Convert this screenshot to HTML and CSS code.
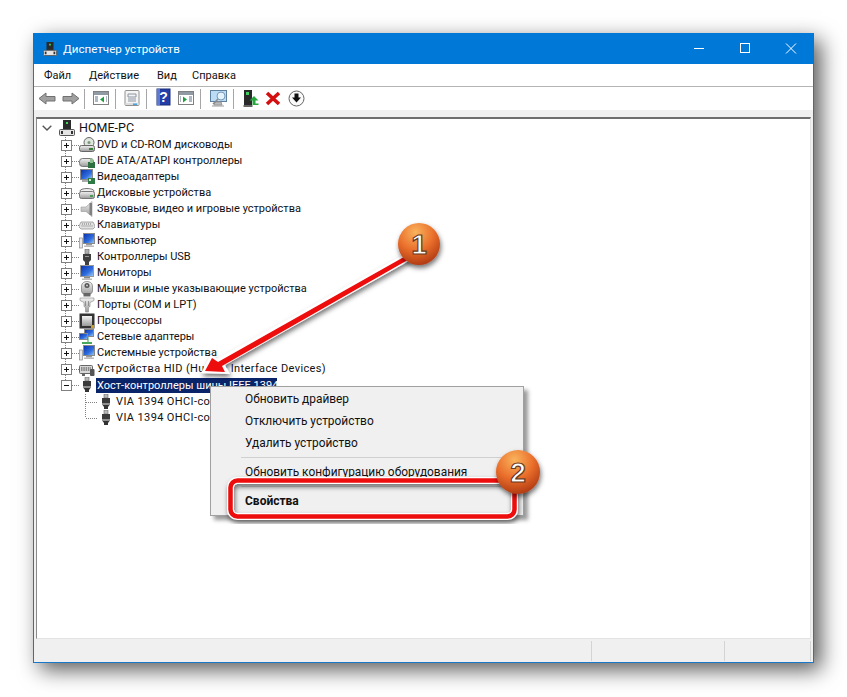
FILE: index.html
```html
<!DOCTYPE html>
<html lang="ru">
<head>
    <meta charset="UTF-8">
    <title>Диспетчер устройств</title>
    <link rel="stylesheet" href="styles.css">
</head>
<body>
    <!-- icons, 16x16 -->
    <svg class="defs">
        <defs>
            <linearGradient id="screen" x1="0" y1="0" x2="1" y2="1">
                <stop offset="0" stop-color="#0a2fa8"/><stop offset=".6" stop-color="#2f6fe0"/><stop offset="1" stop-color="#a8d0f5"/>
            </linearGradient>
            <linearGradient id="metal" x1="0" y1="0" x2="0" y2="1">
                <stop offset="0" stop-color="#f2f2f2"/><stop offset="1" stop-color="#9a9a9a"/>
            </linearGradient>
            <radialGradient id="ball" cx=".42" cy=".22" r=".85">
                <stop offset="0" stop-color="#f9b35c"/><stop offset=".5" stop-color="#ea6f2c"/><stop offset="1" stop-color="#a8320f"/>
            </radialGradient>
            <filter id="soft" x="-20%" y="-20%" width="140%" height="140%">
                <feDropShadow dx="1" dy="3" stdDeviation="2.500" flood-color="#000" flood-opacity=".55"/>
            </filter>
            <symbol id="i-pc" viewBox="0 0 16 16">
                <rect x="4" y="0" width="8" height="10" fill="#2a2a2a"/>
                <rect x="7" y="2" width="2" height="2" fill="#45d060"/>
                <rect x="0.500" y="9.500" width="15" height="6" rx="1" fill="#e4e4e4" stroke="#555"/>
                <rect x="2" y="11" width="2" height="3" fill="#333"/>
                <rect x="12" y="11" width="2" height="3" fill="#333"/>
            </symbol>
            <symbol id="i-dvd" viewBox="0 0 16 16">
                <circle cx="10" cy="5.500" r="5" fill="#dfe6df" stroke="#666"/>
                <circle cx="10" cy="5.500" r="1.500" fill="#7a9a7a"/>
                <rect x="0.500" y="8.500" width="15" height="6" rx="2" fill="url(#metal)" stroke="#666"/>
                <rect x="10" y="11" width="4" height="2" fill="#3d7d3d"/>
            </symbol>
            <symbol id="i-ide" viewBox="0 0 16 16">
                <rect x="0.500" y="5.500" width="14" height="8" rx="3" fill="url(#metal)" stroke="#777"/>
                <rect x="9" y="9" width="7" height="6" fill="#2f7040"/>
                <rect x="11" y="6" width="3" height="4" fill="#8fbf8f"/>
            </symbol>
            <symbol id="i-video" viewBox="0 0 16 16">
                <rect x="1.500" y="0.500" width="12" height="10" fill="url(#screen)" stroke="#8a8a8a"/>
                <rect x="3" y="11" width="7" height="2" fill="#aaa"/>
                <rect x="9" y="9" width="7" height="6" fill="#2f7a45"/>
                <rect x="10" y="10" width="2" height="2" fill="#cfe8c8"/>
            </symbol>
            <symbol id="i-disk" viewBox="0 0 16 16">
                <ellipse cx="8" cy="6" rx="7" ry="2.500" fill="#eee" stroke="#777"/>
                <rect x="0.500" y="6.500" width="15" height="7" rx="2" fill="url(#metal)" stroke="#777"/>
                <rect x="11" y="10" width="3" height="2" fill="#4a9a5a"/>
            </symbol>
            <symbol id="i-sound" viewBox="0 0 16 16">
                <polygon points="2,6 7,6 13,0.500 13,15.500 7,10.500 2,10.500" fill="url(#metal)" stroke="#999" stroke-width=".6"/>
                <rect x="10.500" y="2" width="2.500" height="12" fill="#808080"/>
            </symbol>
            <symbol id="i-kbd" viewBox="0 0 16 16">
                <path d="M2 5h12l2 4v1l-2 2H2L0 10V9z" fill="#e2e2e2" stroke="#888" stroke-width=".7"/>
                <path d="M3 7h10M2.500 9h11" stroke="#777" stroke-dasharray="1 1"/>
            </symbol>
            <symbol id="i-comp" viewBox="0 0 16 16">
                <rect x="0.500" y="5" width="3" height="10" fill="#e8e8e8" stroke="#8a8a8a" stroke-width=".7"/>
                <rect x="4.500" y="0.500" width="11" height="10" fill="url(#screen)" stroke="#8a8a8a"/>
                <rect x="7" y="11" width="6" height="1.500" fill="#999"/>
                <rect x="5" y="12.500" width="10" height="1.500" fill="#bbb"/>
            </symbol>
            <symbol id="i-usb" viewBox="0 0 16 16">
                <rect x="6" y="0" width="4" height="5" fill="#b0b0b0" stroke="#666" stroke-width=".6"/>
                <path d="M4 5h8v6l-2 2v3H6v-3l-2-2z" fill="#3f3f3f"/>
                <rect x="6" y="7" width="4" height="1" fill="#999"/>
            </symbol>
            <symbol id="i-mon" viewBox="0 0 16 16">
                <rect x="1.500" y="0.500" width="13" height="11" fill="url(#screen)" stroke="#999"/>
                <rect x="5" y="12" width="6" height="1.500" fill="#888"/>
                <rect x="3" y="13.500" width="10" height="1.500" fill="#bbb"/>
            </symbol>
            <symbol id="i-mouse" viewBox="0 0 16 16">
                <path d="M2.500 5c0-6 11-6 11 0v5c0 5-11 5-11 0z" fill="url(#metal)" stroke="#777" stroke-width=".7"/>
                <circle cx="8" cy="4.500" r="2.500" fill="#555"/>
                <circle cx="8" cy="4.500" r="1" fill="#ccc"/>
                <rect x="4.500" y="12" width="7" height="3.500" fill="#666"/>
            </symbol>
            <symbol id="i-port" viewBox="0 0 16 16">
                <path d="M1 1h14v2.500l-4 2v4l-1.500 1v4.500h-3V10.500L5 9.500v-4l-4-2z" fill="url(#metal)" stroke="#888" stroke-width=".6"/>
                <path d="M6.500 4v5M9.500 4v5" stroke="#777" stroke-width=".7"/>
            </symbol>
            <symbol id="i-cpu" viewBox="0 0 16 16">
                <rect x="0.500" y="0.500" width="15" height="15" fill="#333"/>
                <rect x="3" y="3" width="10" height="10" fill="url(#metal)"/>
                <rect x="12" y="12" width="3" height="3" fill="#c99a2e"/>
            </symbol>
            <symbol id="i-net" viewBox="0 0 16 16">
                <rect x="5.500" y="0.500" width="9" height="7" fill="url(#screen)" stroke="#888"/>
                <rect x="0.500" y="4.500" width="8" height="6" fill="url(#screen)" stroke="#888"/>
                <path d="M9 8v5" stroke="#3c9a4f" fill="none"/>
                <rect x="3" y="13" width="10" height="2" fill="#49a85c"/>
            </symbol>
            <symbol id="i-hid" viewBox="0 0 16 16">
                <rect x="0.500" y="4.500" width="13" height="8" rx="1" fill="#d8d8d8" stroke="#666"/>
                <path d="M2 7h10M2 9h10" stroke="#3a3a3a" stroke-dasharray="1.500 .8"/>
                <rect x="11" y="8" width="4.500" height="7" rx="1" fill="#555"/>
                <rect x="3" y="12" width="3" height="3" fill="#666"/>
            </symbol>
            <symbol id="i-fw" viewBox="0 0 16 16">
                <rect x="6" y="0" width="4" height="4" fill="#b8b8b8" stroke="#666" stroke-width=".6"/>
                <rect x="4" y="4" width="8" height="5" fill="#3a3a3a"/>
                <rect x="4" y="9" width="8" height="2" fill="#909090"/>
                <path d="M4.500 11h7L10 13v2H6v-2z" fill="#333"/>
            </symbol>
        </defs>
    </svg>

    <div class="window">
        <div class="titlebar">
            <svg class="title-icon"><use href="#i-pc"/></svg>
            <span class="title-text">Диспетчер устройств</span>
            <div class="win-btns">
                <svg class="win-btn" viewBox="0 0 46 31"><path d="M18 15.500h10" stroke="#fff"/></svg>
                <svg class="win-btn" viewBox="0 0 46 31"><rect x="18.500" y="10.500" width="9" height="9" fill="none" stroke="#fff"/></svg>
                <svg class="win-btn" viewBox="0 0 46 31"><path d="M18 10.500l10 10M28 10.500l-10 10" stroke="#fff"/></svg>
            </div>
        </div>

        <div class="menubar">
            <span class="menu-item menu-file">Файл</span>
            <span class="menu-item menu-action">Действие</span>
            <span class="menu-item menu-view">Вид</span>
            <span class="menu-item">Справка</span>
        </div>

        <div class="toolbar">
            <svg class="tool" viewBox="0 0 23 23"><path d="M3 11.500l7-5.500v3.500h9v4.500h-9v3z" fill="#a0a0a0" stroke="#707070"/></svg>
            <svg class="tool" viewBox="0 0 23 23"><path d="M20 11.500l-7-5.500v3.500H4v4.500h9v3z" fill="#a0a0a0" stroke="#707070"/></svg>
            <i class="tool-sep"></i>
            <svg class="tool" viewBox="0 0 23 23">
                <rect x="3.500" y="4.500" width="15" height="13" fill="#fff" stroke="#808080"/><rect x="4" y="5" width="14" height="3" fill="#8f9aa5"/>
                <path d="M5 10h3M5 12h3M5 14h3M16 10h1M16 12h1M16 14h1" stroke="#5f7389"/><path d="M14 9.500v6l-4-3z" fill="#1f9f3f"/>
            </svg>
            <i class="tool-sep"></i>
            <svg class="tool" viewBox="0 0 23 23">
                <rect x="4" y="3.500" width="14" height="15" rx="1" fill="#f4f4f4" stroke="#909090"/><rect x="4.500" y="16" width="13" height="2" fill="#ddd"/>
                <path d="M7 7h8v3H7zM7 12h8M7 14h8" fill="none" stroke="#8a95a0"/><rect x="12" y="16.500" width="4" height="1.500" fill="#4aa3e0"/>
            </svg>
            <i class="tool-sep"></i>
            <svg class="tool" viewBox="0 0 23 23">
                <rect x="5" y="2" width="13" height="16" fill="#2440a8" stroke="#1a2c78"/><rect x="5" y="2" width="3" height="16" fill="#5d78d0"/>
                <text class="help-mark" x="11.500" y="15">?</text>
            </svg>
            <svg class="tool" viewBox="0 0 23 23">
                <rect x="3.500" y="4.500" width="15" height="13" fill="#fff" stroke="#808080"/><rect x="4" y="5" width="14" height="3" fill="#8f9aa5"/>
                <path d="M5 10h1M5 12h1M5 14h1M14 10h3M14 12h3M14 14h3" stroke="#5f7389"/><path d="M8 9.500v6l4-3z" fill="#1f9f3f"/>
            </svg>
            <i class="tool-sep"></i>
            <svg class="tool tool-wide" viewBox="0 0 25 23">
                <rect x="4.500" y="3.500" width="16" height="11" fill="#bcdcf5" stroke="#5f7f9f"/><path d="M8 18h8l-1-3H9zM6 19h12" fill="#bbb" stroke="#999"/>
                <circle cx="15" cy="9" r="4" fill="#e4f2fc" stroke="#7a9ab5"/><path d="M12 12l-5 5" stroke="#888" stroke-width="1.500"/>
            </svg>
            <i class="tool-sep"></i>
            <svg class="tool" viewBox="0 0 23 23">
                <rect x="5" y="3" width="8" height="15" fill="#2a2a2a"/><rect x="7" y="5" width="3" height="3" fill="#3fd05f"/>
                <path d="M4.500 19h9" stroke="#666" stroke-width="2"/><path d="M15 9l4.500 4.500h-3v3h3v1.500h-6V13.500h-3z" fill="#26a83f"/>
            </svg>
            <svg class="tool" viewBox="0 0 23 23"><path d="M5 6l12 11M17 6L5 17" stroke="#d40f0f" stroke-width="3.600"/></svg>
            <svg class="tool" viewBox="0 0 23 23">
                <circle cx="11.500" cy="11.500" r="7.500" fill="#fafafa" stroke="#666"/><path d="M9.500 6.500h4v4h2.500l-4.500 5-4.500-5h2.500z" fill="#111"/>
            </svg>
        </div>

        <div class="tree">
            <div class="root-row">
                <svg class="chevron" viewBox="0 0 10 6"><path d="M.7.700L5 5l4.300-4.300" fill="none" stroke="#555" stroke-width="1.400"/></svg>
                <svg class="icon"><use href="#i-pc"/></svg>
                <span class="root-label">HOME-PC</span>
            </div>
            <div class="row"><span class="twist"></span><i class="dash"></i><svg class="icon"><use href="#i-dvd"/></svg><span class="label">DVD и CD-ROM дисководы</span></div>
            <div class="row"><span class="twist"></span><i class="dash"></i><svg class="icon"><use href="#i-ide"/></svg><span class="label">IDE ATA/ATAPI контроллеры</span></div>
            <div class="row"><span class="twist"></span><i class="dash"></i><svg class="icon"><use href="#i-video"/></svg><span class="label">Видеоадаптеры</span></div>
            <div class="row"><span class="twist"></span><i class="dash"></i><svg class="icon"><use href="#i-disk"/></svg><span class="label">Дисковые устройства</span></div>
            <div class="row"><span class="twist"></span><i class="dash"></i><svg class="icon"><use href="#i-sound"/></svg><span class="label">Звуковые, видео и игровые устройства</span></div>
            <div class="row"><span class="twist"></span><i class="dash"></i><svg class="icon"><use href="#i-kbd"/></svg><span class="label">Клавиатуры</span></div>
            <div class="row"><span class="twist"></span><i class="dash"></i><svg class="icon"><use href="#i-comp"/></svg><span class="label">Компьютер</span></div>
            <div class="row"><span class="twist"></span><i class="dash"></i><svg class="icon"><use href="#i-usb"/></svg><span class="label">Контроллеры USB</span></div>
            <div class="row"><span class="twist"></span><i class="dash"></i><svg class="icon"><use href="#i-mon"/></svg><span class="label">Мониторы</span></div>
            <div class="row"><span class="twist"></span><i class="dash"></i><svg class="icon"><use href="#i-mouse"/></svg><span class="label">Мыши и иные указывающие устройства</span></div>
            <div class="row"><span class="twist"></span><i class="dash"></i><svg class="icon"><use href="#i-port"/></svg><span class="label">Порты (COM и LPT)</span></div>
            <div class="row"><span class="twist"></span><i class="dash"></i><svg class="icon"><use href="#i-cpu"/></svg><span class="label">Процессоры</span></div>
            <div class="row"><span class="twist"></span><i class="dash"></i><svg class="icon"><use href="#i-net"/></svg><span class="label">Сетевые адаптеры</span></div>
            <div class="row"><span class="twist"></span><i class="dash"></i><svg class="icon"><use href="#i-comp"/></svg><span class="label">Системные устройства</span></div>
            <div class="row"><span class="twist"></span><i class="dash"></i><svg class="icon"><use href="#i-hid"/></svg><span class="label latin">Устройства HID (Human Interface Devices)</span></div>
            <div class="row"><span class="twist open last"></span><i class="dash"></i><svg class="icon"><use href="#i-fw"/></svg><span class="label selected">Хост-контроллеры шины IEEE 1394</span></div>
            <div class="row child first-child"><span class="vline"></span><i class="dash"></i><svg class="icon"><use href="#i-fw"/></svg><span class="label latin">VIA 1394 OHCI-сов</span></div>
            <div class="row child"><span class="vline last"></span><i class="dash"></i><svg class="icon"><use href="#i-fw"/></svg><span class="label latin">VIA 1394 OHCI-сов</span></div>
        </div>

        <div class="statusbar">
            <span class="pane pane-main"></span>
            <span class="pane pane-mid"></span>
            <span class="pane pane-end"></span>
        </div>
    </div>

    <div class="context-menu">
        <div class="ctx-item">Обновить драйвер</div>
        <div class="ctx-item">Отключить устройство</div>
        <div class="ctx-item">Удалить устройство</div>
        <div class="ctx-sep"></div>
        <div class="ctx-item">Обновить конфигурацию оборудования</div>
        <div class="ctx-sep"></div>
        <div class="ctx-item ctx-bold">Свойства</div>
    </div>

    <svg class="marks" viewBox="0 0 847 697">
        <g filter="url(#soft)">
            <rect x="230.500" y="480.500" width="284" height="36" rx="7" fill="none" stroke="#fff" stroke-width="7"/>
            <rect x="230.500" y="480.500" width="284" height="36" rx="7" fill="none" stroke="#ee0a0a" stroke-width="4.500"/>
        </g>
        <g filter="url(#soft)">
            <polygon points="201,373 211,355 217,359 410,251 414,258 225,365 230,374" fill="#fff"/>
            <polygon points="205,371 212,358 218,362 411,253 413,257 222,366 225,372" fill="#ee0a0a"/>
        </g>
        <g filter="url(#soft)">
            <circle cx="419" cy="244" r="21" fill="url(#ball)"/>
            <circle cx="518" cy="472" r="22" fill="url(#ball)"/>
        </g>
        <text class="badge-num" x="419" y="254">1</text>
        <text class="badge-num" x="518" y="482">2</text>
    </svg>
</body>
</html>
```

FILE: styles.css
```css
* {
    box-sizing: border-box;
}

html, body {
    height: 100%;
}

body {
    margin: 0;
    padding: 33px 33px 0;
    background: #fff;
    font-family: Roboto, "Noto Sans", sans-serif;
    font-size: 11px;
    color: #111;
    overflow: hidden;
}

.defs {
    display: block;
    width: 0;
    height: 0;
}

/* window */
.window {
    width: 781px;
    height: 630px;
    display: flex;
    flex-direction: column;
    background: #f0f0f0;
    border: 1px solid #1a78c8;
    border-top: 0;
    box-shadow: 7px 7px 20px rgba(0, 0, 0, .65);
}

.titlebar {
    height: 31px;
    margin: 0 -1px;
    display: flex;
    align-items: center;
    background: #0078d7;
    color: #fff;
    padding-left: 10px;
}

.title-icon {
    width: 14px;
    height: 16px;
}

.title-text {
    margin-left: 6px;
    font-size: 11.600px;
}

.win-btns {
    margin-left: auto;
    display: flex;
}

.win-btn {
    width: 46px;
    height: 31px;
}

.menubar {
    height: 23px;
    display: flex;
    background: #fff;
    border-bottom: 1px solid #b4b4b4;
    padding-left: 10px;
    align-items: center;
}

.menu-item {
    flex: none;
}

.menu-file {
    width: 45px;
}

.menu-action {
    width: 68px;
}

.menu-view {
    width: 35px;
}

.toolbar {
    height: 23px;
    display: flex;
    align-items: center;
    background: #fff;
    padding-left: 2px;
}

.tool {
    width: 23px;
    height: 23px;
}

.tool-wide {
    width: 25px;
}

.tool-sep {
    width: 1px;
    height: 20px;
    margin: 0 5px 0 2px;
    background: #a6a6a6;
}

.help-mark {
    font: bold 14px "Liberation Sans", sans-serif;
    fill: #fff;
    text-anchor: middle;
}

/* device tree */
.tree {
    flex: 1;
    margin: 7px 2px 1px;
    background: #fff;
    border-top: 2px solid #6e6e6e;
    border-left: 1px solid #8a8a8a;
    border-right: 1px solid #e3e3e3;
    border-bottom: 1px solid #e3e3e3;
}

.root-row {
    height: 18px;
    display: flex;
    align-items: center;
    padding: 0 0 1px 5px;
}

.chevron {
    width: 10px;
    height: 6px;
    margin-right: 7px;
}

.icon {
    width: 16px;
    height: 16px;
    flex: none;
}

.root-label {
    margin-left: 4px;
    font-size: 12.500px;
}

.row {
    height: 16px;
    display: flex;
    align-items: center;
    padding-left: 24px;
    white-space: nowrap;
}

.child {
    padding-left: 48px;
}

.first-child {
    margin-top: 1px;
}

.twist {
    position: relative;
    width: 9px;
    height: 16px;
    background: repeating-linear-gradient(to bottom, #808080 0 1px, transparent 1px 2px) center / 1px 100% no-repeat;
}

.twist::before {
    content: "";
    position: absolute;
    left: 0;
    top: 3px;
    width: 9px;
    height: 9px;
    border: 1px solid #808080;
    background:
        linear-gradient(#111, #111) center / 5px 1px no-repeat,
        linear-gradient(#111, #111) center / 1px 5px no-repeat,
        #fff;
}

.twist.open::before {
    background:
        linear-gradient(#111, #111) center / 5px 1px no-repeat,
        #fff;
}

.twist.last {
    background-size: 1px 50%;
    background-position: top;
}

.vline {
    width: 1px;
    height: 16px;
    background: repeating-linear-gradient(to bottom, #808080 0 1px, transparent 1px 2px);
}

.vline.last {
    height: 8px;
    align-self: flex-start;
}

.dash {
    width: 9px;
    height: 1px;
    background: repeating-linear-gradient(to right, #808080 0 1px, transparent 1px 2px);
}

.child .dash {
    width: 12px;
}

.label {
    margin-left: 1px;
    padding: 0 1px;
    line-height: 16px;
}

.latin {
    letter-spacing: .38px;
}

.selected {
    background: #0a246a;
    color: #fff;
    height: 15px;
    line-height: 15px;
    width: 181px;
}

/* status bar */
.statusbar {
    height: 22px;
    display: flex;
}

.pane {
    border-right: 1px solid #d4d4d4;
    margin: 1px 0;
}

.pane-main {
    width: 558px;
}

.pane-mid {
    width: 133px;
}

.pane-end {
    width: 86px;
}

/* context menu over the tree */
.context-menu {
    position: absolute;
    left: 210px;
    top: 386px;
    width: 314px;
    height: 130px;
    padding-top: 1px;
    font-size: 11.900px;
    background: #f0f0f0;
    border: 1px solid #a0a0a0;
    box-shadow: 4px 4px 4px rgba(0, 0, 0, .4);
}

.ctx-item {
    height: 22px;
    line-height: 22px;
    padding-left: 34px;
}

.ctx-bold {
    font-size: 12px;
    font-weight: bold;
}

.ctx-sep {
    height: 1px;
    margin: 3px 2px 3px 30px;
    background: #d0d0d0;
}

/* red annotations */
.marks {
    position: absolute;
    left: 0;
    top: 0;
    width: 847px;
    height: 697px;
    pointer-events: none;
}

.badge-num {
    font: bold 28px "Liberation Sans", sans-serif;
    fill: #fff;
    stroke: #6a3a20;
    stroke-width: 1.200px;
    text-anchor: middle;
}
```
